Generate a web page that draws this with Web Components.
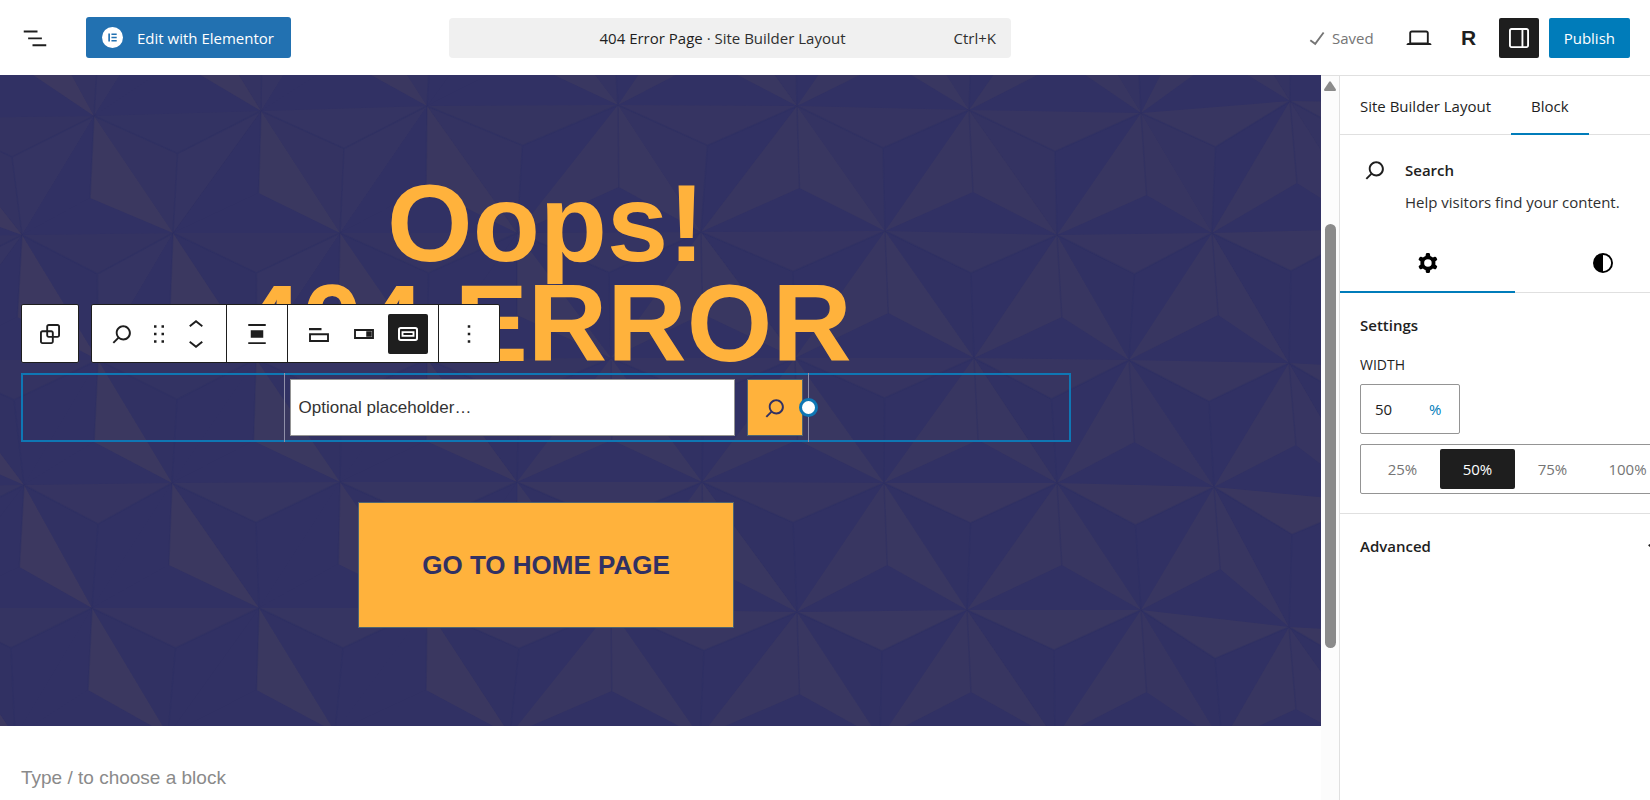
<!DOCTYPE html>
<html lang="en">
<head>
<meta charset="utf-8">
<title>404 Error Page - Site Builder Layout</title>
<style>
  body {
    margin: 0;
    font-family: "Segoe UI", "Open Sans", sans-serif;
    font-size: 15px;
    color: #1e1e1e;
    background: #fff;
  }
</style>
</head>
<body>
<editor-app></editor-app>

<script>
const icons = {
  list: '<path d="M3 6h11v1.5H3V6Zm3.5 5.5h11V13h-11v-1.5ZM21 17H10v1.5h11V17Z"/>',
  check: '<path d="M16.7 7.1l-6.3 8.5-3.3-2.5-.9 1.2 4.5 3.4L17.9 8z"/>',
  desktop: '<path d="M20.5 16h-.7V8c0-1.1-.9-2-2-2H6.2c-1.1 0-2 .9-2 2v8h-.7c-.8 0-1.5.7-1.5 1.5h20c0-.8-.7-1.5-1.5-1.5zM5.7 8c0-.3.2-.5.5-.5h11.6c.3 0 .5.2.5.5v7.6H5.7V8z"/>',
  drawer: '<path d="M18 4H6c-1.1 0-2 .9-2 2v12c0 1.1.9 2 2 2h12c1.1 0 2-.9 2-2V6c0-1.1-.9-2-2-2zm-4 14.5H6c-.3 0-.5-.2-.5-.5V6c0-.3.2-.5.5-.5h8v13zm4.5-.5c0 .3-.2.5-.5.5h-2.5v-13H18c.3 0 .5.2.5.5v12z"/>',
  search: '<path d="M13 5c-3.3 0-6 2.7-6 6 0 1.4.5 2.7 1.3 3.7l-3.8 3.8 1.1 1.1 3.8-3.8c1 .8 2.3 1.3 3.7 1.3 3.3 0 6-2.7 6-6S16.3 5 13 5zm0 10.5c-2.5 0-4.5-2-4.5-4.5s2-4.5 4.5-4.5 4.5 2 4.5 4.5-2 4.5-4.5 4.5z"/>',
  group: '<path d="M18 4h-7c-1.1 0-2 .9-2 2v3H6c-1.1 0-2 .9-2 2v7c0 1.1.9 2 2 2h7c1.1 0 2-.9 2-2v-3h3c1.1 0 2-.9 2-2V6c0-1.1-.9-2-2-2zm-4.5 14c0 .3-.2.5-.5.5H6c-.3 0-.5-.2-.5-.5v-7c0-.3.2-.5.5-.5h3V13c0 1.1.9 2 2 2h2.5v3zm0-4.5H11c-.3 0-.5-.2-.5-.5v-2.5H13c.3 0 .5.2.5.5v2.5zm5-.5c0 .3-.2.5-.5.5h-3V11c0-1.1-.9-2-2-2h-2.5V6c0-.3.2-.5.5-.5h7c.3 0 .5.2.5.5v7z"/>',
  drag: '<path d="M8 7h2V5H8v2zm0 6h2v-2H8v2zm0 6h2v-2H8v2zm6-14v2h2V5h-2zm0 8h2v-2h-2v2zm0 6h2v-2h-2v2z"/>',
  up: '<path d="M6.5 12.4L12 8l5.5 4.4-.9 1.2L12 10l-4.5 3.6-1-1.2z"/>',
  down: '<path d="M17.5 11.6L12 16l-5.5-4.4.9-1.2L12 14l4.5-3.6 1 1.2z"/>',
  align: '<path d="M19 5.5H5V4h14v1.5ZM19 20H5v-1.5h14V20ZM7 9h10v6H7V9Z"/>',
  label: '<path d="M4 7.2h10V9H4z"/><path d="M4.8 12.2h14.4v5.4H4.8z" fill="none" stroke="currentColor" stroke-width="1.5"/>',
  outside: '<path d="M4.8 8.8h14.4v6.4H4.8z" fill="none" stroke="currentColor" stroke-width="1.5"/><path d="M13.8 9.8h4.4v4.4h-4.4z"/>',
  inside: '<rect x="4.8" y="7.2" width="14.4" height="9.6" rx="1.4" fill="none" stroke="currentColor" stroke-width="1.6"/><path d="M7.6 10.5h8.8v3H7.6z" fill="none" stroke="currentColor" stroke-width="1.5"/>',
  more: '<path d="M13 19h-2v-2h2v2zm0-6h-2v-2h2v2zm0-6h-2V5h2v2z"/>',
  cog: '<path fill-rule="evenodd" d="M10.289 4.836A1 1 0 0111.275 4h1.306a1 1 0 01.987.836l.244 1.466c.787.26 1.503.679 2.108 1.218l1.393-.522a1 1 0 011.216.437l.653 1.13a1 1 0 01-.23 1.273l-1.148.944a6.025 6.025 0 010 2.435l1.149.946a1 1 0 01.23 1.272l-.653 1.13a1 1 0 01-1.216.437l-1.394-.522c-.605.54-1.32.958-2.108 1.218l-.244 1.466a1 1 0 01-.987.836h-1.306a1 1 0 01-.986-.836l-.244-1.466a5.995 5.995 0 01-2.108-1.218l-1.394.522a1 1 0 01-1.217-.436l-.653-1.131a1 1 0 01.23-1.272l1.149-.946a6.026 6.026 0 010-2.435l-1.148-.944a1 1 0 01-.23-1.272l.653-1.131a1 1 0 011.217-.437l1.393.522a5.994 5.994 0 012.108-1.218l.244-1.466zM14.929 12a3 3 0 11-6 0 3 3 0 016 0z"/>',
  contrast: '<path fill-rule="evenodd" d="M20 12a8 8 0 1 1-16 0 8 8 0 0 1 16 0Zm-1.5 0a6.5 6.5 0 0 1-6.5 6.5v-13a6.5 6.5 0 0 1 6.5 6.5Z"/>',
  elementor: '<circle cx="12" cy="12" r="12"/><path d="M7.2 7.4h1.9v9.2H7.2zM10.8 7.4h6v1.8h-6zM10.8 11.1h6v1.8h-6zM10.8 14.8h6v1.8h-6z" fill="#2271b1"/>',
};

// shared by every shadow root
const resetCss = /*css*/`
  *, *::before, *::after { box-sizing: border-box; }
  [hidden] { display: none; }
  button, input, select { font: inherit; color: inherit; margin: 0; }
  button { display: inline-flex; align-items: center; justify-content: center; padding: 0; border: 0; background: none; cursor: pointer; }
`;

class BaseElement extends HTMLElement {
  connectedCallback() {
    if (this.shadowRoot) return;
    this.attachShadow({ mode: "open" });
    const template = document.createElement("template");
    template.innerHTML = `<style>${resetCss}</style>${this.render()}`;
    this.shadowRoot.appendChild(template.content.cloneNode(true));
    this.createListeners();
  }

  render() { return ""; }

  createListeners() {}
}

class WpIcon extends BaseElement {
  render() {
    return /*html*/`
      <style>
        :host { display: inline-block; flex: none; width: var(--size, 30px); height: var(--size, 30px); }
        svg { display: block; width: 100%; height: 100%; fill: currentColor; }
      </style>
      <svg viewBox="0 0 24 24" aria-hidden="true">${icons[this.getAttribute("name")]}</svg>
    `;
  }
}

class EditorHeader extends BaseElement {
  render() {
    return /*html*/`
      <style>
        :host {
          display: grid;
          grid-template-columns: minmax(0, 449fr) minmax(0, 562fr) minmax(0, 639fr);
          align-items: center;
          height: 75px;
          background: #fff;
        }
        .left { display: flex; align-items: center; gap: 31px; padding-left: 15px; }
        .icon { width: 40px; height: 40px; border-radius: 2px; }
        .elementor {
          gap: 14px;
          height: 41px;
          padding: 0 17px 0 16px;
          border-radius: 3px;
          background: #2271b1;
          color: #fff;
          white-space: nowrap;
        }
        .elementor wp-icon { --size: 21px; }
        .command {
          display: grid;
          grid-template-columns: 1fr;
          justify-content: stretch;
          width: 100%;
          height: 40px;
          padding-right: 15px;
          border-radius: 4px;
          background: #f0f0f0;
        }
        .command span { grid-area: 1 / 1; white-space: nowrap; }
        .command .title { justify-self: center; }
        .command small { color: #2f2f2f; font-size: inherit; }
        .command .shortcut { justify-self: end; color: #2f2f2f; }
        .right { display: flex; align-items: center; justify-content: flex-end; gap: 10px; padding-right: 20px; }
        .saved { display: flex; align-items: center; padding-right: 15px; color: #757575; }
        .dark { background: #1e1e1e; color: #fff; }
        .r { font-family: "Liberation Sans", sans-serif; font-size: 21px; font-weight: 700; }
        .publish { height: 40px; padding: 0 15px; border-radius: 2px; background: #007cba; color: #fff; }
      </style>
      <div class="left">
        <button class="icon" aria-label="Document Overview"><wp-icon name="list"></wp-icon></button>
        <button class="elementor"><wp-icon name="elementor"></wp-icon>Edit with Elementor</button>
      </div>
      <button class="command">
        <span class="title">404 Error Page <small>· Site Builder Layout</small></span>
        <span class="shortcut">Ctrl+K</span>
      </button>
      <div class="right">
        <div class="saved"><wp-icon name="check"></wp-icon>Saved</div>
        <button class="icon" aria-label="View"><wp-icon name="desktop"></wp-icon></button>
        <button class="icon r">R</button>
        <button class="icon dark" aria-label="Settings"><wp-icon name="drawer"></wp-icon></button>
        <button class="publish">Publish</button>
      </div>
    `;
  }
}

// Relief of three sided pyramids. Each row is a list of [x, y] corners,
// rows are shifted by half a cell from one to the next.
const rows = [
  [[-150, -90], [20, -94], [180, -96], [344, -98], [520, -98], [705, -98], [885, -96], [1060, -96], [1212, -100], [1370, -100]],
  [[-70, 43], [94, 41], [261, 36], [427, 31], [618, 30], [797, 31], [969, 35], [1141, 38], [1290, 26], [1440, 28]],
  [[-140, 162], [22, 160], [173, 158], [340, 158], [517, 158], [701, 157], [885, 156], [1057, 160], [1212, 158], [1370, 154]],
  [[-70, 285], [98, 285], [256, 284], [427, 284], [611, 283], [795, 283], [974, 283], [1129, 285], [1289, 288], [1440, 296]],
  [[-140, 411], [24, 410], [172, 408], [340, 407], [517, 407], [702, 407], [884, 408], [1057, 408], [1214, 412], [1370, 427]],
  [[-70, 533], [92, 533], [259, 533], [427, 533], [611, 534], [797, 537], [967, 535], [1141, 535], [1289, 552], [1440, 560]],
  [[-140, 662], [15, 662], [168, 660], [335, 657], [510, 660], [700, 662], [880, 664], [1055, 664], [1222, 668], [1380, 680]],
];

class PyramidPattern extends BaseElement {
  facet(points, opacity) {
    return `<polygon points="${points.map((p) => p.join()).join(" ")}" fill="#46405c" fill-opacity="${opacity.toFixed(2)}"/>`;
  }

  facets() {
    let out = "";
    for (let r = 0; r < rows.length - 1; r++) {
      const top = rows[r];
      const bottom = rows[r + 1];
      // odd rows start half a cell further right
      const shift = r % 2;
      for (let i = 0; i < top.length - 1; i++) {
        const a = top[i];
        const b = top[i + 1];
        const c = bottom[i + shift];
        if (c) {
          const x = (a[0] + b[0]) / 2;
          const mid = [x, (a[1] + b[1]) / 2 + 40];
          const k = Math.min(Math.max(x / 1321, 0), 1);
          out += this.facet([a, b, mid], 0.12 + 0.22 * k + (r > 3 ? 0.1 : 0));
          out += this.facet([a, mid, c], r < 2 ? 0.12 : 0.03);
          if (r < 3 && x < 400) out += this.facet([b, mid, c], 0.18);
          out += `<path class="edge" d="M${a}L${mid}L${b}M${mid}L${c}"/>`;
        }
        const d = bottom[i + shift - 1];
        const e = bottom[i + shift];
        if (d && e) {
          const k = Math.min(Math.max(a[0] / 1321, 0), 1);
          const mid = [a[0] + (k - 0.4) * 12, a[1] + 82];
          out += this.facet([a, mid, e], 0.52 - 0.22 * k);
          out += this.facet([a, d, mid], k > 0.45 ? 0.36 : 0.02);
          out += `<path class="edge" d="M${a}L${mid}"/>`;
        }
      }
    }
    return out;
  }

  render() {
    return /*html*/`
      <style>
        :host { display: block; overflow: hidden; background: #313164; }
        svg { display: block; width: 100%; height: 100%; }
        .edge { fill: none; stroke: #2c2f63; stroke-opacity: .4; stroke-width: 1.5; }
      </style>
      <svg viewBox="0 0 1321 651" preserveAspectRatio="xMidYMid slice" aria-hidden="true">${this.facets()}</svg>
    `;
  }
}

class BlockToolbar extends BaseElement {
  render() {
    return /*html*/`
      <style>
        :host { display: flex; gap: 12px; color: #1e1e1e; }
        .bar { display: flex; height: 59px; border: 1px solid #1e1e1e; border-radius: 2px; background: #fff; }
        .segment { display: flex; align-items: center; padding: 0 8px; }
        .segment + .segment { border-left: 1px solid #1e1e1e; }
        button { width: 44px; height: 44px; }
        .single { padding: 0 6px; }
        .drag { width: 30px; }
        .mover { display: flex; flex-direction: column; }
        .mover button { height: 18px; }
        .active { width: 40px; height: 40px; margin: 0 2px; border-radius: 2px; background: #1e1e1e; color: #fff; }
        .options button:not(.active) { width: 45px; }
      </style>
      <div class="bar">
        <div class="segment single"><button aria-label="Select parent block"><wp-icon name="group"></wp-icon></button></div>
      </div>
      <div class="bar">
        <div class="segment">
          <button aria-label="Search"><wp-icon name="search"></wp-icon></button>
          <button class="drag" aria-label="Drag"><wp-icon name="drag"></wp-icon></button>
          <div class="mover">
            <button aria-label="Move up"><wp-icon name="up"></wp-icon></button>
            <button aria-label="Move down"><wp-icon name="down"></wp-icon></button>
          </div>
        </div>
        <div class="segment"><button aria-label="Align"><wp-icon name="align"></wp-icon></button></div>
        <div class="segment options">
          <button aria-label="Toggle search label"><wp-icon name="label"></wp-icon></button>
          <button aria-label="Change button position"><wp-icon name="outside"></wp-icon></button>
          <button class="active" aria-label="Use button with icon"><wp-icon name="inside"></wp-icon></button>
        </div>
        <div class="segment"><button aria-label="Options"><wp-icon name="more"></wp-icon></button></div>
      </div>
    `;
  }
}

class SearchBlock extends BaseElement {
  render() {
    return /*html*/`
      <style>
        :host { display: flex; justify-content: center; outline: 2px solid #0f77b4; outline-offset: -2px; }
        .frame {
          position: relative;
          display: flex;
          gap: 12px;
          width: 50%;
          padding: 6px 5px;
          border: solid #8f8fa8;
          border-width: 0 1px;
        }
        input {
          flex: 1;
          min-width: 0;
          height: 57px;
          padding: 0 8px;
          border: 1px solid #949494;
          border-radius: 0;
          background: #fff;
          font-size: 17px;
        }
        input::placeholder { color: #333; opacity: 1; }
        button { width: 56px; border: 1px solid #4f6470; background: #ffb23c; color: #313163; }
        /* resize handle on the right edge */
        .handle {
          position: absolute;
          top: 50%;
          right: -10px;
          width: 19px;
          height: 19px;
          margin-top: -10px;
          border: 3px solid #0f77b4;
          border-radius: 50%;
          background: #fff;
        }
      </style>
      <div class="frame">
        <input type="text" aria-label="Optional placeholder text" placeholder="Optional placeholder…">
        <button aria-label="Search"><wp-icon name="search"></wp-icon></button>
        <span class="handle"></span>
      </div>
    `;
  }
}

class EditorCanvas extends BaseElement {
  render() {
    return /*html*/`
      <style>
        :host { display: block; overflow: hidden; font-family: Arial, "Liberation Sans", sans-serif; background: #fff; }
        .hero { display: grid; }
        .hero > * { grid-area: 1 / 1; }
        /* the pattern takes its height from the content over it */
        pyramid-pattern { min-height: 100%; height: 0; }
        .content { position: relative; width: 80%; max-width: 1050px; margin-left: 21px; padding: 98px 0; }
        h1 { margin: 0; color: #ffb23c; font-size: 110px; line-height: 100px; font-weight: 700; text-align: center; }
        block-toolbar { position: absolute; bottom: calc(100% + 10px); left: 0; font-family: "Open Sans", sans-serif; }
        .selected { position: relative; }
        .actions { display: flex; justify-content: center; margin-top: 60px; }
        .home {
          padding: 47px 63px;
          border: 1px solid #4f6470;
          background: #ffb23c;
          color: #313163;
          font-size: 26px;
          line-height: 30px;
          font-weight: 700;
          text-decoration: none;
        }
        .appender { margin: 0; padding: 40px 21px; color: #8a8a8a; font-size: 19px; line-height: 24px; }
      </style>
      <div class="hero">
        <pyramid-pattern></pyramid-pattern>
        <div class="content">
          <h1>Oops!<br>404 ERROR</h1>
          <div class="selected">
            <search-block></search-block>
            <block-toolbar></block-toolbar>
          </div>
          <div class="actions"><a class="home" href="#">GO TO HOME PAGE</a></div>
        </div>
      </div>
      <p class="appender">Type / to choose a block</p>
    `;
  }
}

class ScrollTrack extends BaseElement {
  render() {
    return /*html*/`
      <style>
        :host { display: flex; flex-direction: column; align-items: center; width: 18px; padding-top: 5px; border-top: 1px solid #e0e0e0; background: #fcfcfc; }
        svg { flex: none; width: 12px; height: 10px; fill: #8b8b8b; }
        .thumb { width: 11px; height: 59%; margin-top: 133px; border-radius: 6px; background: #8b8b8b; }
      </style>
      <svg viewBox="0 0 12 10" aria-hidden="true"><path d="M5 1Q6-.5 7 1L12 8.500Q12 10 11 10H1Q0 10 0 8.500Z"/></svg>
      <div class="thumb"></div>
    `;
  }
}

class PanelSection extends BaseElement {
  render() {
    return /*html*/`
      <style>
        :host { display: block; padding: 20px 20px 19px; border-bottom: 1px solid #e0e0e0; }
        :host([plain]) { border-bottom: 0; }
        h2 { display: flex; align-items: center; justify-content: space-between; margin: 0; height: 24px; font-size: 15px; line-height: 24px; font-weight: 600; }
      </style>
      <h2>${this.getAttribute("heading")}${this.hasAttribute("plain") ? '<wp-icon name="down"></wp-icon>' : ""}</h2>
      <slot></slot>
    `;
  }
}

class WidthControl extends BaseElement {
  render() {
    const option = (value) => /*html*/`
      <label><input type="radio" name="width" value="${value}" ${value === 50 ? "checked" : ""}><span>${value}%</span></label>
    `;
    return /*html*/`
      <style>
        :host { display: block; padding-top: 18px; }
        .title { display: block; margin-bottom: 9px; font-size: 14px; line-height: 20px; font-weight: 500; }
        .unit { display: flex; width: 100px; height: 50px; border: 1px solid #949494; border-radius: 2px; }
        .unit input { width: 60px; padding: 0 14px; border: 0; background: none; }
        select { appearance: none; width: 38px; padding: 0 0 0 8px; border: 0; background: none; color: #007cba; }
        .group { display: flex; margin-top: 10px; height: 50px; padding: 4px; border: 1px solid #949494; border-radius: 2px; }
        .group label { position: relative; flex: 1; display: flex; color: #757575; }
        .group input { position: absolute; opacity: 0; }
        .group span { flex: 1; display: flex; align-items: center; justify-content: center; border-radius: 2px; }
        .group input:checked + span { background: #1e1e1e; color: #fff; }
      </style>
      <label class="title" for="width">WIDTH</label>
      <div class="unit">
        <input id="width" type="text" inputmode="numeric" value="50">
        <select aria-label="Unit"><option>%</option></select>
      </div>
      <div class="group" role="radiogroup" aria-label="Percentage width">${[25, 50, 75, 100].map(option).join("")}</div>
    `;
  }

  createListeners() {
    const field = this.shadowRoot.getElementById("width");
    this.shadowRoot.querySelector(".group").addEventListener("change", ({ target: { value } }) => {
      field.value = value;
    });
  }
}

class EditorSidebar extends BaseElement {
  render() {
    return /*html*/`
      <style>
        :host { display: block; overflow: hidden; border: solid #e0e0e0; border-width: 1px 0 0 1px; background: #fff; }
        .inner { width: 350px; }
        .tabs { display: flex; height: 59px; border-bottom: 1px solid #e0e0e0; }
        .tabs button { height: 59px; padding: 2px 20px 0; border-bottom: 2px solid transparent; }
        .tabs .active { border-color: #007cba; }
        .card { display: grid; grid-template-columns: 30px 1fr; column-gap: 15px; padding: 20px 20px 16px; }
        .card h2 { margin: 0 0 2px; font-size: 15px; line-height: 30px; font-weight: 600; }
        .card p { grid-column: 2; margin: 0; line-height: 30px; color: #2f2f2f; white-space: nowrap; }
        .icons { height: 60px; color: #000; }
        .icons button { flex: 1; height: 60px; }
      </style>
      <div class="inner">
        <div class="tabs">
          <button>Site Builder Layout</button>
          <button class="active">Block</button>
        </div>
        <div class="card">
          <wp-icon name="search"></wp-icon>
          <h2>Search</h2>
          <p>Help visitors find your content.</p>
        </div>
        <div class="tabs icons">
          <button class="active" aria-label="Settings"><wp-icon name="cog"></wp-icon></button>
          <button aria-label="Styles"><wp-icon name="contrast"></wp-icon></button>
        </div>
        <panel-section heading="Settings"><width-control></width-control></panel-section>
        <panel-section heading="Advanced" plain></panel-section>
      </div>
    `;
  }

  createListeners() {
    this.shadowRoot.querySelectorAll(".tabs").forEach((tabs) => {
      tabs.addEventListener("click", (e) => {
        const button = e.target.closest("button");
        if (!button) return;
        tabs.querySelector(".active").classList.remove("active");
        button.classList.add("active");
      });
    });
  }
}

class EditorApp extends BaseElement {
  render() {
    return /*html*/`
      <style>
        :host { display: flex; flex-direction: column; height: 100vh; overflow: hidden; }
        editor-header { flex: none; }
        main { flex: 1; display: flex; min-height: 0; }
        editor-canvas { flex: 1; min-width: 0; }
        scroll-track { flex: none; }
        editor-sidebar { flex: 0 0 311px; }
      </style>
      <editor-header></editor-header>
      <main>
        <editor-canvas></editor-canvas>
        <scroll-track></scroll-track>
        <editor-sidebar></editor-sidebar>
      </main>
    `;
  }
}

customElements.define("wp-icon", WpIcon);
customElements.define("editor-header", EditorHeader);
customElements.define("pyramid-pattern", PyramidPattern);
customElements.define("block-toolbar", BlockToolbar);
customElements.define("search-block", SearchBlock);
customElements.define("editor-canvas", EditorCanvas);
customElements.define("scroll-track", ScrollTrack);
customElements.define("panel-section", PanelSection);
customElements.define("width-control", WidthControl);
customElements.define("editor-sidebar", EditorSidebar);
customElements.define("editor-app", EditorApp);
</script>
</body>
</html>
